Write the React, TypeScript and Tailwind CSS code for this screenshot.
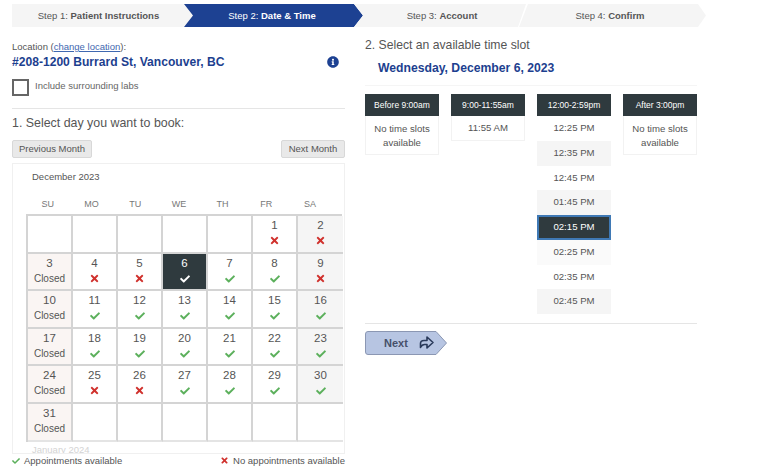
import { FaCheck, FaTimes, FaInfoCircle } from "react-icons/fa";

type Day = { n?: number; s?: "ok" | "no" | "closed" | "sel" };

const rows: Day[][] = [
  [{}, {}, {}, {}, {}, { n: 1, s: "no" }, { n: 2, s: "no" }],
  [{ n: 3, s: "closed" }, { n: 4, s: "no" }, { n: 5, s: "no" }, { n: 6, s: "sel" }, { n: 7, s: "ok" }, { n: 8, s: "ok" }, { n: 9, s: "no" }],
  [{ n: 10, s: "closed" }, { n: 11, s: "ok" }, { n: 12, s: "ok" }, { n: 13, s: "ok" }, { n: 14, s: "ok" }, { n: 15, s: "ok" }, { n: 16, s: "ok" }],
  [{ n: 17, s: "closed" }, { n: 18, s: "ok" }, { n: 19, s: "ok" }, { n: 20, s: "ok" }, { n: 21, s: "ok" }, { n: 22, s: "ok" }, { n: 23, s: "ok" }],
  [{ n: 24, s: "closed" }, { n: 25, s: "no" }, { n: 26, s: "no" }, { n: 27, s: "ok" }, { n: 28, s: "ok" }, { n: 29, s: "ok" }, { n: 30, s: "ok" }],
  [{ n: 31, s: "closed" }, {}, {}, {}, {}, {}, {}],
];

const slots = [
  { t: "12:25 PM", c: "bg-white" },
  { t: "12:35 PM", c: "bg-[#f5f5f5]" },
  { t: "12:45 PM", c: "bg-white" },
  { t: "01:45 PM", c: "bg-[#f5f5f5]" },
  { t: "02:15 PM", c: "bg-[#2f3a3e] text-white border-2 border-[#3f79b5]" },
  { t: "02:25 PM", c: "bg-[#fafafa]" },
  { t: "02:35 PM", c: "bg-white" },
  { t: "02:45 PM", c: "bg-[#f5f5f5]" },
];

function DayCell({ d, col, last }: { d: Day; col: number; last: boolean }) {
  const tone =
    d.s === "sel" ? "bg-[#2f3a3e] text-white" : d.n === undefined ? "bg-white" : col === 0 ? "bg-[#faf5f3]" : col === 6 ? "bg-[#f5f5f5]" : "bg-white";
  const edge = col === 6 ? "" : "border-r-2";
  const under = last ? "border-b-2 border-b-[#e4e4e4]" : "border-b-2";
  return (
    <div className={`flex flex-col items-center h-[37.6px] pt-[1px] border-[#d4d4d4] text-[#555] ${edge} ${under} ${tone}`}>
      {d.n !== undefined && <span className={`text-[11.5px] leading-[16px] ${d.s === "sel" ? "text-white" : ""}`}>{d.n}</span>}
      {d.s === "ok" && <FaCheck className="mt-[3px] text-[#5cb05c]" size={10} />}
      {d.s === "sel" && <FaCheck className="mt-[3px] text-white" size={10} />}
      {d.s === "no" && <FaTimes className="mt-[2px] text-[#d0312d]" size={11} />}
      {d.s === "closed" && <span className="text-[10px] leading-[14px] mt-[1px]">Closed</span>}
    </div>
  );
}

function Stepper() {
  return (
    <div className="flex h-[23px] w-[694px] ml-3 mt-1 text-[9.5px] text-[#555] leading-[23px]">
      <div className="w-[181px] -mr-[9px] bg-[#f5f5f5] text-center pr-[8px]">
        Step 1: <b>Patient Instructions</b>
      </div>
      <div className="relative w-[179px] bg-[#1d4192] text-white text-center pr-[3px] [clip-path:polygon(0_0,170px_0,100%_50%,170px_100%,0_100%,9px_50%)]">
        Step 2: <b>Date &amp; Time</b>
      </div>
      <div className="w-[172px] -ml-[9px] bg-[#f5f5f5] text-center pl-[4px] [clip-path:polygon(0_0,100%_0,calc(100%-8px)_100%,0_100%,9px_50%)]">
        Step 3: <b>Account</b>
      </div>
      <div className="w-[187px] -ml-[7px] bg-[#f5f5f5] text-center pr-[5px] [clip-path:polygon(9px_0,179px_0,100%_50%,179px_100%,0_100%)]">
        Step 4: <b>Confirm</b>
      </div>
    </div>
  );
}

function Calendar() {
  return (
    <div className="mt-[5px] h-[291px] overflow-hidden border border-[#f0f0f0] pl-[13px] pr-[2px]">
      <div className="pl-[6px] pt-[6px] text-[9.5px] leading-[14px] text-[#555]">December 2023</div>
      <div className="mt-[14px] grid grid-cols-[repeat(7,43.7px)] text-[9px] leading-[12px] text-[#777] text-center">
        {["SU", "MO", "TU", "WE", "TH", "FR", "SA"].map((w) => (
          <span key={w}>{w}</span>
        ))}
      </div>
      <div className="mt-[4px] grid grid-cols-[repeat(7,45px)] border-t-2 border-l-2 border-[#d4d4d4]">
        {rows.map((r, ri) =>
          r.map((d, ci) => <DayCell key={`${ri}-${ci}`} d={d} col={ci} last={ri === rows.length - 1} />)
        )}
      </div>
      <div className="pl-[6px] mt-[2px] text-[9.5px] leading-[11px] text-[#d4d4d4]">January 2024</div>
    </div>
  );
}

function SlotColumn({ title, children }: { title: string; children: React.ReactNode }) {
  return (
    <div className="w-[74px]">
      <div className="h-[22px] bg-[#2f3a3e] text-white text-[8.5px] leading-[22px] text-center">{title}</div>
      {children}
    </div>
  );
}

function NoSlots() {
  return (
    <div className="h-[39px] pt-[6px] border border-t-0 border-[#f2f2f2] text-center text-[9.6px] leading-[13.5px] text-[#555]">
      No time slots
      <br />
      available
    </div>
  );
}

function NextButton() {
  return (
    <button className="relative mt-[7px] block h-[24px] w-[82px] text-left">
      <svg className="absolute inset-0" width="82" height="24" viewBox="0 0 82 24">
        <path d="M3 .5H71L81.5 12 71 23.5H3A2.5 2.5 0 0 1 .5 21V3A2.5 2.5 0 0 1 3 .5Z" fill="#b7c5e2" stroke="#8b97b3" />
        <path d="M55.5 16.5V12.5Q55.5 9.5 59 9.5H62V6L68 11.5L62 17V13.5H59.5Q57 13.5 55.5 16.5Z" fill="none" stroke="#2a3a5a" strokeWidth="1.6" strokeLinejoin="round" />
      </svg>
      <span className="relative block pl-[19px] text-[11px] font-bold leading-[20px] text-[#46506a]">Next</span>
    </button>
  );
}

export default function App() {
  return (
    <div className="h-[470px] w-[768px] overflow-hidden bg-white font-['Liberation_Sans',Arial,sans-serif] text-[#555]">
      <Stepper />
      <div className="flex mt-[12px]">
        <div className="w-[333px] ml-3 shrink-0">
          <div className="text-[9.5px] leading-[13px] pt-[1px]">
            Location (<span className="text-[#3f68b0] underline">change location</span>):
          </div>
          <div className="flex items-center justify-between h-[18px] pr-[6px]">
            <b className="text-[12.1px] text-[#1d3f8f]">#208-1200 Burrard St, Vancouver, BC</b>
            <FaInfoCircle className="text-[#1d4192]" size={12} />
          </div>
          <label className="flex items-start mt-[8px] h-[17px]">
            <span className="block w-[17px] h-[17px] border-2 border-[#666] bg-white" />
            <span className="ml-[6px] text-[9.5px] leading-[14px] text-[#666]">Include surrounding labs</span>
          </label>
          <div className="mt-[12px] border-t border-[#e5e5e5]" />
          <h2 className="mt-[5px] text-[12.4px] leading-[18px] font-normal">1. Select day you want to book:</h2>
          <div className="flex justify-between mt-[8px]">
            {["Previous Month", "Next Month"].map((b) => (
              <button key={b} className={`h-[18px] rounded-[2px] bg-[#e9e9e9] border border-[#d8d8d8] text-[9.5px] leading-[16px] text-[#555] ${b === "Next Month" ? "w-[64px]" : "w-[80px]"}`}>
                {b}
              </button>
            ))}
          </div>
          <Calendar />
          <div className="flex justify-between text-[9.5px] leading-[13px] text-[#555]">
            <span className="flex items-center gap-[4px]">
              <FaCheck className="text-[#5cb05c]" size={8} /> Appointments available
            </span>
            <span className="flex items-center gap-[4px]">
              <FaTimes className="text-[#d0312d]" size={9} /> No appointments available
            </span>
          </div>
        </div>
        <div className="w-[332px] ml-[20px]">
          <h2 className="text-[12.2px] leading-[12px] font-normal">2. Select an available time slot</h2>
          <div className="pl-[13px] mt-[10px] text-[12.2px] leading-[15px] font-bold text-[#1d3f8f]">Wednesday, December 6, 2023</div>
          <div className="mt-[9px] pt-[8px] border-t border-[#f5f5f5] flex gap-[12px]">
            <SlotColumn title="Before 9:00am">
              <NoSlots />
            </SlotColumn>
            <SlotColumn title="9:00-11:55am">
              <div className="h-[25px] pt-[5px] border border-t-0 border-[#f2f2f2] text-center text-[9.6px] leading-[14px]">11:55 AM</div>
            </SlotColumn>
            <SlotColumn title="12:00-2:59pm">
              {slots.map((s) => (
                <div key={s.t} className={`h-[24.75px] flex items-center justify-center text-[9.6px] ${s.c}`}>
                  {s.t}
                </div>
              ))}
            </SlotColumn>
            <SlotColumn title="After 3:00pm">
              <NoSlots />
            </SlotColumn>
          </div>
          <div className="mt-[9px] border-t border-[#e5e5e5]" />
          <NextButton />
        </div>
      </div>
    </div>
  );
}
